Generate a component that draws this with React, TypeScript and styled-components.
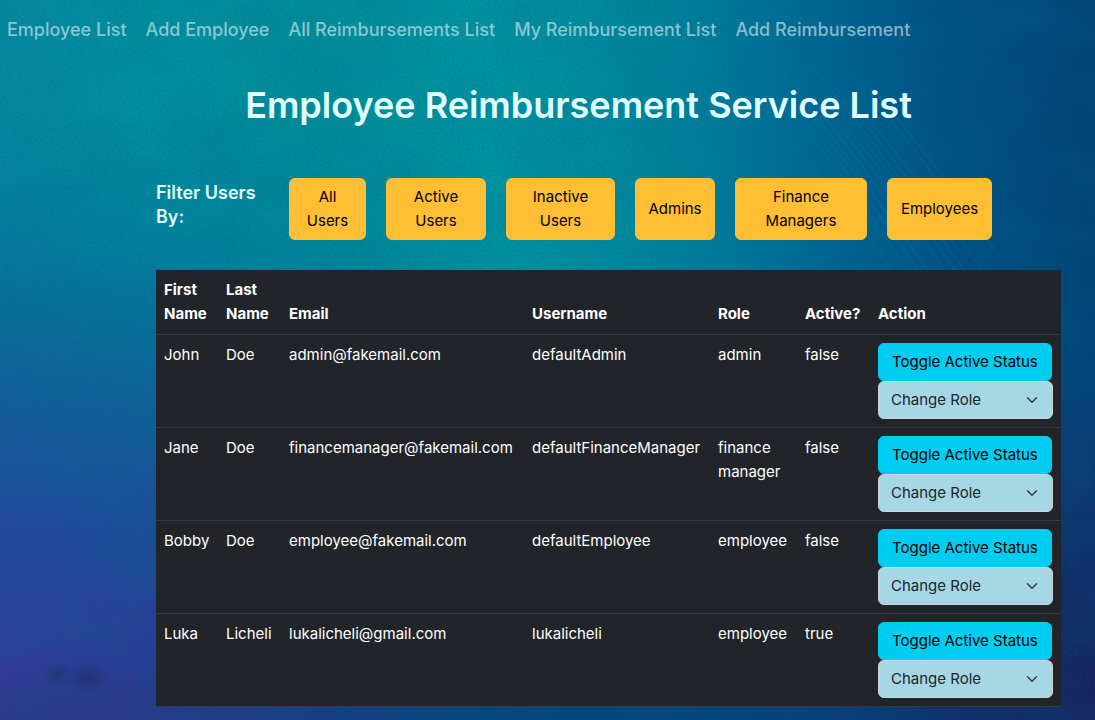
import React from 'react';
import styled, { createGlobalStyle } from 'styled-components';

const GlobalStyle = createGlobalStyle`
  *, *::before, *::after { box-sizing: border-box; }
  body {
    margin: 0;
    font-family: Inter, "Liberation Sans", sans-serif;
    font-size: 16px;
    line-height: 24px;
    color: #fff;
    background: #04506f;
  }
  #root { min-height: 100vh; display: flex; }
`;

const Page = styled.div`
  flex: 1;
  min-width: 0;
  position: relative;
  isolation: isolate;
  overflow: hidden;
`;

const Backdrop = styled.svg`
  position: absolute;
  inset: 0;
  width: 100%;
  height: 100%;
  z-index: -1;
`;

const Nav = styled.nav`
  display: flex;
  flex-wrap: wrap;
  gap: 19px;
  padding: 15px 7px;
`;

const NavLink = styled.a`
  color: rgba(255, 255, 255, 0.55);
  font-size: 18px;
  font-weight: 500;
  line-height: 30px;
  text-decoration: none;
  &:hover { color: rgba(255, 255, 255, 0.75); }
`;

const Content = styled.main`
  padding: 21px 34px 13px 156px;
`;

const Title = styled.h1`
  margin: 0 60px 49px 0;
  color: #e0ffff;
  font-size: 36px;
  font-weight: 600;
  line-height: 48px;
  text-align: center;
`;

const Filters = styled.div`
  display: grid;
  grid-template-columns: 113fr 77fr 100fr 109fr 80fr 132fr 105fr;
  gap: 20px;
  margin: 0 69px 30px 0;
`;

const FilterLabel = styled.h5`
  margin: 3px 0 0;
  color: #e0ffff;
  font-size: 18px;
  font-weight: 600;
  line-height: 24px;
`;

const Button = styled.button<{ $tone: string }>`
  padding: 6px 12px;
  border: 1px solid ${(p) => p.$tone};
  border-radius: 6px;
  background: ${(p) => p.$tone};
  color: #000;
  font: inherit;
  font-size: 15px;
  line-height: 24px;
  cursor: pointer;
`;

const ToggleButton = styled(Button)`
  padding: 6px 13px;
`;

const Table = styled.table`
  width: 100%;
  table-layout: fixed;
  border-collapse: separate;
  border-spacing: 0;
  background: #212529;
  font-size: 15px;
`;

const HeadCell = styled.th<{ $share: number }>`
  width: ${(p) => p.$share}%;
  padding: 8px;
  border-bottom: 1px solid #373b3e;
  font-weight: 700;
  text-align: left;
  vertical-align: bottom;
`;

const Cell = styled.td`
  padding: 8px;
  border-bottom: 1px solid #373b3e;
  vertical-align: top;
`;

const Actions = styled.div`
  display: flex;
  flex-direction: column;
  align-items: flex-start;
`;

const RoleField = styled.label`
  display: grid;
  align-items: center;
  width: 100%;
`;

const RoleSelect = styled.select`
  grid-area: 1 / 1;
  appearance: none;
  width: 100%;
  height: 38px;
  padding: 6px 36px 6px 12px;
  border: 1px solid #ced4da;
  border-radius: 6px;
  background: #a5d8e4;
  color: #212529;
  font: inherit;
  line-height: 24px;
`;

const Chevron = styled.svg`
  grid-area: 1 / 1;
  justify-self: end;
  width: 16px;
  height: 12px;
  margin-right: 13px;
  pointer-events: none;
`;

const links = ['Employee List', 'Add Employee', 'All Reimbursements List', 'My Reimbursement List', 'Add Reimbursement'];
const filters = ['All Users', 'Active Users', 'Inactive Users', 'Admins', 'Finance Managers', 'Employees'];
const columns: [string, number][] = [
  ['First Name', 62], ['Last Name', 63], ['Email', 243], ['Username', 186], ['Role', 87], ['Active?', 73], ['Action', 191],
];
const totalShare = columns.reduce((sum, [, share]) => sum + share, 0);
const users = [
  ['John', 'Doe', 'admin@fakemail.com', 'defaultAdmin', 'admin', 'false'],
  ['Jane', 'Doe', 'financemanager@fakemail.com', 'defaultFinanceManager', 'finance manager', 'false'],
  ['Bobby', 'Doe', 'employee@fakemail.com', 'defaultEmployee', 'employee', 'false'],
  ['Luka', 'Licheli', 'lukalicheli@gmail.com', 'lukalicheli', 'employee', 'true'],
];

const scratches = Array.from({ length: 14 }, (_, i) => {
  const x = 770 + i * 8;
  const y = 60 + ((i * 37) % 90);
  return `M${x} ${y}Q${x + 65} ${y + 75} ${x + 125} ${y + 165}`;
});

function PaintedBackdrop() {
  return (
    <Backdrop viewBox="0 0 1095 720" preserveAspectRatio="none" aria-hidden="true">
      <defs>
        <linearGradient id="sweep" gradientUnits="userSpaceOnUse" x1="0" y1="40" x2="1080" y2="0">
          <stop offset="0" stopColor="#068ca3" />
          <stop offset="0.15" stopColor="#0192a0" />
          <stop offset="0.3" stopColor="#01909b" />
          <stop offset="0.45" stopColor="#0197a3" />
          <stop offset="0.57" stopColor="#018c9f" />
          <stop offset="0.67" stopColor="#017c9b" />
          <stop offset="0.77" stopColor="#016492" />
          <stop offset="0.88" stopColor="#015083" />
          <stop offset="1" stopColor="#034476" />
        </linearGradient>
        <linearGradient id="depth" x1="0" y1="0" x2="0" y2="1">
          <stop offset="0.16" stopColor="#0b7aa0" stopOpacity="0" />
          <stop offset="0.38" stopColor="#08739d" stopOpacity="0.75" />
          <stop offset="0.52" stopColor="#14629f" stopOpacity="0.95" />
          <stop offset="0.74" stopColor="#27489f" />
          <stop offset="0.92" stopColor="#363a9a" />
          <stop offset="1" stopColor="#35358c" />
        </linearGradient>
        <linearGradient id="left" x1="0" y1="0" x2="1" y2="0">
          <stop offset="0" stopColor="#fff" />
          <stop offset="0.14" stopColor="#ccc" />
          <stop offset="0.45" stopColor="#000" />
        </linearGradient>
        <mask id="leftSide"><rect width="1095" height="720" fill="url(#left)" /></mask>
        <linearGradient id="floor" x1="0" y1="0" x2="0" y2="1">
          <stop offset="0.35" stopColor="#07437f" stopOpacity="0" />
          <stop offset="0.9" stopColor="#07437f" />
        </linearGradient>
        <radialGradient id="corner" gradientUnits="userSpaceOnUse" cx="1095" cy="720" r="360">
          <stop offset="0" stopColor="#1b1d5c" />
          <stop offset="1" stopColor="#1b1d5c" stopOpacity="0" />
        </radialGradient>
        <radialGradient id="smudge">
          <stop offset="0" stopColor="#1c2455" stopOpacity="0.45" />
          <stop offset="1" stopColor="#1c2455" stopOpacity="0" />
        </radialGradient>
        <filter id="grain" x="0" y="0" width="100%" height="100%">
          <feTurbulence type="fractalNoise" baseFrequency="0.5" numOctaves="3" seed="4" />
          <feColorMatrix values="0 0 0 0 0  0 0 0 0 0.1  0 0 0 0 0.2  0.8 0 0 0 -0.25" />
        </filter>
        <filter id="clouds" x="0" y="0" width="100%" height="100%">
          <feTurbulence type="fractalNoise" baseFrequency="0.012 0.02" numOctaves="6" seed="21" />
          <feColorMatrix values="0 0 0 0 0  0 0 0 0 0.15  0 0 0 0 0.3  1.2 0 0 0 -0.45" />
        </filter>
      </defs>
      <rect width="1095" height="720" fill="url(#sweep)" />
      <rect width="1095" height="720" fill="url(#floor)" />
      <rect width="1095" height="720" fill="url(#depth)" mask="url(#leftSide)" />
      <rect width="1095" height="720" fill="url(#corner)" />
      <ellipse cx="58" cy="675" rx="16" ry="11" fill="url(#smudge)" />
      <ellipse cx="88" cy="678" rx="24" ry="16" fill="url(#smudge)" />
      <rect width="1095" height="720" filter="url(#clouds)" opacity="0.3" />
      <rect width="1095" height="720" filter="url(#grain)" opacity="0.6" />
      {scratches.map((d) => <path key={d} d={d} fill="none" stroke="#1686ad" strokeOpacity="0.28" />)}
    </Backdrop>
  );
}

export default function App() {
  return (
    <>
      <GlobalStyle />
      <Page>
        <PaintedBackdrop />
        <Nav>
          {links.map((text) => <NavLink key={text} href="#">{text}</NavLink>)}
        </Nav>
        <Content>
          <Title>Employee Reimbursement Service List</Title>
          <Filters>
            <FilterLabel>Filter Users By:</FilterLabel>
            {filters.map((text) => <Button key={text} type="button" $tone="#ffbe33">{text}</Button>)}
          </Filters>
          <Table>
            <thead>
              <tr>
                {columns.map(([name, share]) => (
                  <HeadCell key={name} scope="col" $share={(share / totalShare) * 100}>{name}</HeadCell>
                ))}
              </tr>
            </thead>
            <tbody>
              {users.map((user) => (
                <tr key={user[2]}>
                  {user.map((value, i) => <Cell key={i}>{value}</Cell>)}
                  <Cell>
                    <Actions>
                      <ToggleButton type="button" $tone="#00cdf0">Toggle Active Status</ToggleButton>
                      <RoleField>
                        <RoleSelect aria-label={`Change role of ${user[0]} ${user[1]}`} defaultValue="">
                          <option value="">Change Role</option>
                          <option value="admin">admin</option>
                          <option value="finance manager">finance manager</option>
                          <option value="employee">employee</option>
                        </RoleSelect>
                        <Chevron viewBox="0 0 16 16" aria-hidden="true">
                          <path d="m2 5 6 6 6-6" fill="none" stroke="#343a40" strokeWidth="2" strokeLinecap="round" strokeLinejoin="round" />
                        </Chevron>
                      </RoleField>
                    </Actions>
                  </Cell>
                </tr>
              ))}
            </tbody>
          </Table>
        </Content>
      </Page>
    </>
  );
}
